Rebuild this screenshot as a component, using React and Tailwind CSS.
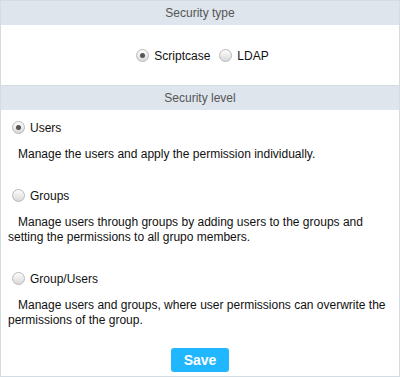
const Radio = ({ checked }) => (
  <span className="inline-flex w-[13px] h-[13px] rounded-full border border-[#b9b9b9] bg-gradient-to-b from-[#fdfdfd] to-[#d9d9d9] items-center justify-center shrink-0">
    {checked && <span className="w-[5px] h-[5px] rounded-full bg-[#555]" />}
  </span>
);

const levels = [
  {
    label: "Users",
    checked: true,
    text: "Manage the users and apply the permission individually.",
  },
  {
    label: "Groups",
    checked: false,
    text: "Manage users through groups by adding users to the groups and setting the permissions to all grupo members.",
  },
  {
    label: "Group/Users",
    checked: false,
    text: "Manage users and groups, where user permissions can overwrite the permissions of the group.",
  },
];

export default function App() {
  return (
    <div
      className="w-[400px] h-[377px] border border-[#d3dbe3] bg-white text-[12px] text-[#111] flex flex-col"
      style={{ fontFamily: '"Liberation Sans", Arial, sans-serif' }}
    >
      <div className="h-[24px] bg-[#dfe5ec] text-[#555] flex items-center justify-center">
        Security type
      </div>
      <div className="h-[60px] flex items-start justify-center pt-[23px] pl-[5px]">
        <label className="flex items-center gap-[5px] h-[15px]">
          <Radio checked />
          <span>Scriptcase</span>
        </label>
        <label className="flex items-center gap-[5px] h-[15px] ml-[9px]">
          <Radio />
          <span>LDAP</span>
        </label>
      </div>
      <div className="h-[25px] border-t border-[#d3dbe3] bg-[#dfe5ec] text-[#555] flex items-center justify-center">
        Security level
      </div>

      <div className="flex flex-col px-[7px] pt-[10px]">
        {levels.map((item, i) => (
          <div key={item.label} className={i > 0 ? "mt-[26px]" : ""}>
            <label className="flex items-center gap-[5px] h-[15px] pl-[4px]">
              <Radio checked={item.checked} />
              <span>{item.label}</span>
            </label>
            <p className="mt-[12px] leading-[15px]">
              {"\u00a0\u00a0\u00a0"}
              {item.text}
            </p>
          </div>
        ))}
      </div>

      <div className="flex justify-center mt-[20px]">
        <button className="w-[58px] h-[24px] rounded-[3px] bg-[#21b7ff] text-white font-bold text-[14px]">
          Save
        </button>
      </div>
    </div>
  );
}
